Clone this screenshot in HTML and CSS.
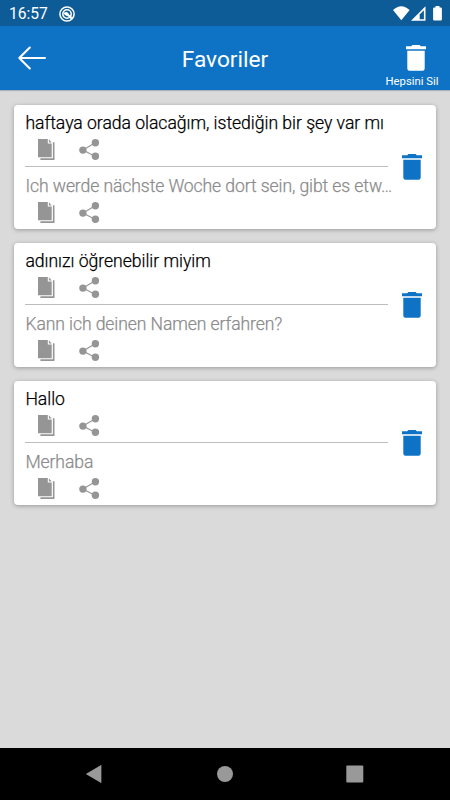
FILE: index.html
```html
<!DOCTYPE html>
<html lang="tr">
<head>
<meta charset="utf-8">
<title>Favoriler</title>
<link rel="stylesheet" href="styles.css">
</head>
<body>
<svg class="defs" width="0" height="0">
  <symbol id="copy" viewBox="0 0 17 21"><path d="M0 0h9.8v4.6h3.9v13.6H0z"/><path d="M10.9 .3L13.7 3.5h-2.8z"/><path d="M14.9 3.3h1.6v17.6H2.4v-1.6h12.5z"/></symbol>
  <symbol id="share" viewBox="0 0 21 21"><path d="M16.2 3.8L4 11l12.2 6.4" fill="none" stroke="currentColor" stroke-width="1.1"/><circle cx="16.4" cy="3.8" r="3.7"/><circle cx="3.9" cy="11.1" r="3.7"/><circle cx="16.4" cy="17.3" r="3.7"/></symbol>
  <symbol id="trash" viewBox="0 0 20 26"><path d="M0 1.2h5.2L6.4 0h7.2l1.2 1.2H20v3H0zM1.3 5.8h17.4v17.7q0 2.2-2.2 2.2h-13q-2.2 0-2.2-2.2z"/></symbol>
</svg>
<div class="screen">
  <div class="status">
    <span class="time">16:57</span>
    <svg class="badge" viewBox="0 0 16 16"><circle cx="8" cy="8" r="7.1" fill="none" stroke="currentColor" stroke-width="1.5"/><circle cx="8" cy="8" r="4.2" fill="none" stroke="currentColor" stroke-width="1.5"/><path d="M4.5 7.3q3-2.7 5 .1 1 2 2.3 1.9l1.7 3.1-1.3 1.2-3.3-3.4q-2.8.3-4.4-2.9z"/></svg>
    <svg class="signals" viewBox="0 0 50 16"><path d="M0 4.1Q8.3-3.5 16.6 4.1L8.3 14.2z"/><path d="M32.5 .3V14.7H18z"/><path d="M26.7 8.4L30.9 4.2v9h-4.2z" fill="#0d5c97"/><path d="M42.5 0h4v1.5h1.2q1.2 0 1.2 1.2v10.6q0 1.2-1.2 1.2h-6.4q-1.2 0-1.2-1.2V2.7q0-1.2 1.2-1.2h1.2z"/></svg>
  </div>
  <header class="bar">
    <svg class="back" viewBox="0 0 28 24"><path d="M27 12H1.3M11.8 1.5L1.3 12l10.5 10.5"/></svg>
    <h1>Favoriler</h1>
    <div class="clear"><svg class="trash"><use href="#trash"/></svg><span>Hepsini Sil</span></div>
  </header>
  <main>
    <article class="card">
      <div class="texts">
        <p>haftaya orada olacağım, istediğin bir şey var mı</p>
        <div class="actions"><svg class="copy"><use href="#copy"/></svg><svg class="share"><use href="#share"/></svg></div>
        <hr>
        <p class="translated">Ich werde nächste Woche dort sein, gibt es etw…</p>
        <div class="actions"><svg class="copy"><use href="#copy"/></svg><svg class="share"><use href="#share"/></svg></div>
      </div>
      <svg class="trash"><use href="#trash"/></svg>
    </article>
    <article class="card">
      <div class="texts">
        <p>adınızı öğrenebilir miyim</p>
        <div class="actions"><svg class="copy"><use href="#copy"/></svg><svg class="share"><use href="#share"/></svg></div>
        <hr>
        <p class="translated">Kann ich deinen Namen erfahren?</p>
        <div class="actions"><svg class="copy"><use href="#copy"/></svg><svg class="share"><use href="#share"/></svg></div>
      </div>
      <svg class="trash"><use href="#trash"/></svg>
    </article>
    <article class="card">
      <div class="texts">
        <p>Hallo</p>
        <div class="actions"><svg class="copy"><use href="#copy"/></svg><svg class="share"><use href="#share"/></svg></div>
        <hr>
        <p class="translated">Merhaba</p>
        <div class="actions"><svg class="copy"><use href="#copy"/></svg><svg class="share"><use href="#share"/></svg></div>
      </div>
      <svg class="trash"><use href="#trash"/></svg>
    </article>
  </main>
  <nav>
    <svg viewBox="0 0 18 18"><path d="M.2 8.7L14.7.2q.7-.3.7.5v16.6q0 .8-.7.5L.2 9.3q-.5-.3 0-.6z"/></svg>
    <svg viewBox="0 0 18 18"><circle cx="9" cy="9" r="8"/></svg>
    <svg viewBox="0 0 18 18"><rect x=".3" y=".5" width="17" height="17" rx="1"/></svg>
  </nav>
</div>
</body>
</html>
```
FILE: styles.css
```css
* { box-sizing: border-box; }
body { margin: 0; font-family: Roboto, "Liberation Sans", sans-serif; }
svg { display: block; fill: currentColor; flex: none; }
.defs { display: none; }
.screen { width: 450px; height: 800px; display: flex; flex-direction: column; background: #dadada; overflow: hidden; }
.status { height: 26px; background: #0d5c97; color: #fff; display: flex; align-items: center; padding: 1px 7px 0 9px; }
.time { font-size: 15.6px; line-height: 24px; width: 50px; }
.badge { width: 16px; height: 16px; }
.signals { width: 50px; height: 16px; margin: 0 0 0 auto; }
.bar { height: 64px; background: #0f73c5; color: #fff; display: grid; grid-template-columns: 90px 1fr 90px; box-shadow: 0 1px 1px #a9b0ba; }
.back { width: 28px; height: 24px; margin: 20px 0 0 18px; fill: none; stroke: #fff; stroke-width: 2; stroke-linecap: round; stroke-linejoin: round; }
h1 { margin: 0; padding-top: 2px; font-size: 22.7px; font-weight: 400; line-height: 64px; text-align: center; }
.clear { display: flex; flex-direction: column; align-items: center; padding: 19px 0 0 14px; }
.clear .trash { margin-left: 8px; }
.clear span { font-size: 11.3px; line-height: 14px; margin-top: 4px; white-space: nowrap; }
.trash { width: 20px; height: 26px; }
main { flex: 1; padding: 15px 14px; display: flex; flex-direction: column; gap: 14px; }
.card { height: 124px; background: #fff; border-radius: 4px; box-shadow: 0 1px 4px rgba(0,0,0,.3); display: flex; align-items: center; justify-content: space-between; padding: 0 14px 0 11px; }
.texts { width: 370px; height: 124px; padding-top: 7px; }
p { margin: 0; padding-left: .4px; font-size: 17.6px; font-weight: 300; line-height: 22px; letter-spacing: -.03px; color: #000; -webkit-text-stroke: .25px currentColor; white-space: nowrap; }
.translated { color: #8c8c8c; letter-spacing: -.1px; }
.actions { display: flex; height: 21px; margin-top: 5px; padding-left: 13px; color: #959595; }
.copy { width: 17px; height: 21px; margin-right: 24px; }
.share { width: 21px; height: 21px; }
hr { width: 363px; height: 1px; border: 0; background: #bdbdbd; margin: 6px 0 8px; }
.card .trash { color: #0f73c5; }
nav { height: 52px; background: #000; color: #999; display: flex; justify-content: space-between; padding: 17px 86px 0; }
nav svg { width: 18px; height: 18px; }
```
